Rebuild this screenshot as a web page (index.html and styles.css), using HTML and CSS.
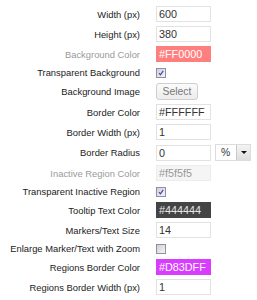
FILE: index.html
```html
<!DOCTYPE html>
<html lang="en">
<head>
    <meta charset="UTF-8">
    <title>Map Settings</title>
    <link rel="stylesheet" href="styles.css">
</head>
<body>
    <table class="settings">
        <tr>
            <td class="label">Width (px)</td>
            <td><input type="text" class="field" value="600"></td>
        </tr>
        <tr>
            <td class="label">Height (px)</td>
            <td><input type="text" class="field" value="380"></td>
        </tr>
        <tr>
            <td class="label disabled">Background Color</td>
            <td><input type="text" class="field color-red" value="#FF0000"></td>
        </tr>
        <tr class="check-row">
            <td class="label">Transparent Background</td>
            <td><span class="check checked"><svg viewBox="0 0 10 10"><path d="M2.5 5.2 L4.3 7.2 L7.8 2.4" /></svg></span></td>
        </tr>
        <tr class="button-row">
            <td class="label">Background Image</td>
            <td><button class="select-btn">Select</button></td>
        </tr>
        <tr>
            <td class="label">Border Color</td>
            <td><input type="text" class="field" value="#FFFFFF"></td>
        </tr>
        <tr>
            <td class="label">Border Width (px)</td>
            <td><input type="text" class="field" value="1"></td>
        </tr>
        <tr>
            <td class="label">Border Radius</td>
            <td>
                <div class="with-unit">
                    <input type="text" class="field" value="0">
                    <div class="unit">
                        <span class="unit-value">%</span>
                        <span class="unit-arrow"></span>
                    </div>
                </div>
            </td>
        </tr>
        <tr>
            <td class="label disabled">Inactive Region Color</td>
            <td><input type="text" class="field inactive" value="#f5f5f5"></td>
        </tr>
        <tr class="check-row">
            <td class="label">Transparent Inactive Region</td>
            <td><span class="check checked"><svg viewBox="0 0 10 10"><path d="M2.5 5.2 L4.3 7.2 L7.8 2.4" /></svg></span></td>
        </tr>
        <tr>
            <td class="label">Tooltip Text Color</td>
            <td><input type="text" class="field color-dark" value="#444444"></td>
        </tr>
        <tr>
            <td class="label">Markers/Text Size</td>
            <td><input type="text" class="field" value="14"></td>
        </tr>
        <tr class="check-row">
            <td class="label">Enlarge Marker/Text with Zoom</td>
            <td><span class="check"></span></td>
        </tr>
        <tr>
            <td class="label">Regions Border Color</td>
            <td><input type="text" class="field color-purple" value="#D83DFF"></td>
        </tr>
        <tr>
            <td class="label">Regions Border Width (px)</td>
            <td><input type="text" class="field" value="1"></td>
        </tr>
    </table>
</body>
</html>
```

FILE: styles.css
```css
body {
    margin: 0;
    padding-top: 4px;
    background: white;
    font-family: "Liberation Sans", Arial, sans-serif;
    color: #222;
}

.settings {
    border-collapse: collapse;
}

.settings td {
    padding: 2px 0;
    height: 16px;
    vertical-align: middle;
}

.settings td.label {
    width: 140px;
    padding-right: 16px;
    text-align: right;
    font-size: 9.4px;
    white-space: nowrap;
}

.settings td.disabled {
    color: #9a9a9a;
}

.check-row td {
    padding: 0;
    height: 17px;
}

.button-row td {
    padding: 0;
    height: 21px;
}

.field {
    box-sizing: border-box;
    width: 55px;
    height: 16px;
    margin: 0;
    padding: 0 2px;
    border: 1px solid #e2e2e2;
    font-family: "Liberation Sans", Arial, sans-serif;
    font-size: 10.8px;
    color: #333;
    display: block;
}

.color-red {
    background: #ff7f7f;
    border-color: #ff7f7f;
    color: white;
}

.color-dark {
    background: #444444;
    border-color: #444444;
    color: #e8e8e8;
}

.color-purple {
    background: #d83dff;
    border-color: #d83dff;
    color: white;
}

.inactive {
    background: #f5f5f5;
    border-color: #ececec;
    color: #9a9a9a;
}

.check {
    display: block;
    box-sizing: border-box;
    width: 10px;
    height: 10px;
    border: 1px solid #8f8f9f;
    background: linear-gradient(135deg, #cfcfd6, #f4f4f8);
}

.check svg {
    display: block;
    width: 8px;
    height: 8px;
    fill: none;
    stroke: #3546a8;
    stroke-width: 1.4;
}

.select-btn {
    display: block;
    box-sizing: border-box;
    width: 42px;
    height: 17px;
    margin: 0;
    padding: 0;
    border: 1px solid #cfcfcf;
    border-radius: 3px;
    background: linear-gradient(#fbfbfb, #ececec);
    font-family: "Liberation Sans", Arial, sans-serif;
    font-size: 10.4px;
    color: #777;
}

.with-unit {
    display: flex;
    gap: 4px;
    align-items: center;
}

.unit {
    box-sizing: border-box;
    display: flex;
    align-items: center;
    justify-content: space-between;
    width: 36px;
    height: 17px;
    border: 1px solid #dcdcdc;
    padding-left: 5px;
    font-size: 10.4px;
    color: #333;
}

.unit-arrow {
    box-sizing: border-box;
    position: relative;
    width: 14px;
    height: 15px;
    border-left: 1px solid #c8c8c8;
    background: linear-gradient(#f4f4f4, #dedede);
}

.unit-arrow::after {
    content: "";
    position: absolute;
    left: 4px;
    top: 6px;
    border-left: 3px solid transparent;
    border-right: 3px solid transparent;
    border-top: 3px solid #111;
}
```
